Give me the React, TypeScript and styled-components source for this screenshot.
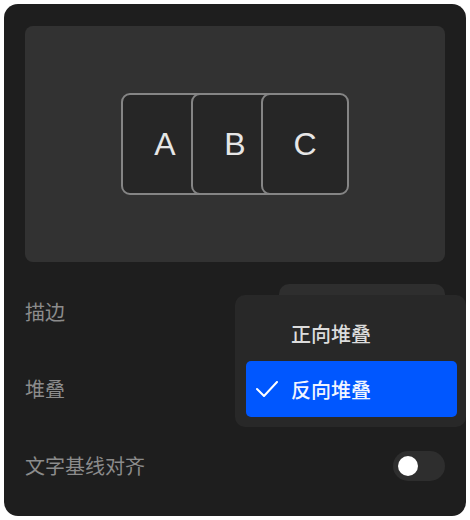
import React from 'react';
import styled, { createGlobalStyle } from 'styled-components';

const GlobalStyle = createGlobalStyle`
  html, body {
    margin: 0;
    padding: 0;
    background: #ffffff;
  }
  * {
    box-sizing: border-box;
  }
`;

const cjk = `"Noto Sans CJK SC", "Noto Sans", sans-serif`;

const Panel = styled.div`
  margin: 4px;
  width: 462px;
  height: 512px;
  background-color: #1e1e1e;
  border-radius: 14px;
  padding: 22px 21px;
  display: flex;
  flex-direction: column;
  gap: 21px;
  font-family: ${cjk};
`;

const Preview = styled.div`
  height: 236px;
  margin-bottom: 1px;
  background-color: #323232;
  border-radius: 8px;
  display: flex;
  align-items: center;
  justify-content: center;
`;

const CardStack = styled.div`
  display: flex;
`;

const Card = styled.div`
  width: 88px;
  height: 102px;
  background-color: #262626;
  border: 2px solid #858585;
  border-radius: 9px;
  display: flex;
  align-items: center;
  justify-content: center;
  font-family: "Liberation Sans", Arial, sans-serif;
  font-size: 32px;
  color: #e6e6e6;

  & + & {
    margin-left: -18px;
  }
`;

const Row = styled.div`
  height: 56px;
  display: flex;
  align-items: center;
  justify-content: space-between;
`;

const Label = styled.span`
  font-size: 20px;
  color: #8c8c8c;
  line-height: 1;
`;

const Select = styled.div`
  position: relative;
  width: 166px;
  height: 56px;
  background-color: #2e2e2e;
  border-radius: 10px;
`;

const Menu = styled.div`
  position: absolute;
  top: 11px;
  left: -44px;
  width: 231px;
  padding: 10px 9px 10px 11px;
  background-color: #282828;
  border-radius: 10px;
  z-index: 10;
  display: flex;
  flex-direction: column;
`;

const Item = styled.div<{ $active?: boolean }>`
  height: 56px;
  display: flex;
  align-items: center;
  padding-left: 10px;
  border-radius: 5px;
  font-size: 20px;
  font-weight: 500;
  color: ${(p) => (p.$active ? '#f2f5ff' : '#dcdcdc')};
  background-color: ${(p) => (p.$active ? '#0057ff' : 'transparent')};
`;

const CheckSlot = styled.span`
  width: 35px;
  display: flex;
  align-items: center;
`;

const Toggle = styled.div`
  width: 52px;
  height: 30px;
  border-radius: 15px;
  background-color: #2e2e2e;
  padding: 5px;
  display: flex;
  align-items: center;
`;

const Knob = styled.span`
  width: 20px;
  height: 20px;
  border-radius: 50%;
  background-color: #ffffff;
`;

const Check = () => (
  <svg width="22" height="16" viewBox="0 0 22 16" fill="none">
    <polyline points="1,8 8,15 21,1" stroke="#ffffff" strokeWidth="2" strokeLinecap="round" strokeLinejoin="round" />
  </svg>
);

const options = ['正向堆叠', '反向堆叠'];
const selected = '反向堆叠';

export default function App() {
  return (
    <>
      <GlobalStyle />
      <Panel>
        <Preview>
          <CardStack>
            {['A', 'B', 'C'].map((l) => (
              <Card key={l}>{l}</Card>
            ))}
          </CardStack>
        </Preview>
        <Row>
          <Label>描边</Label>
          <Select>
            <Menu>
              {options.map((o) => (
                <Item key={o} $active={o === selected}>
                  <CheckSlot>{o === selected && <Check />}</CheckSlot>
                  {o}
                </Item>
              ))}
            </Menu>
          </Select>
        </Row>
        <Row>
          <Label>堆叠</Label>
        </Row>
        <Row>
          <Label>文字基线对齐</Label>
          <Toggle>
            <Knob />
          </Toggle>
        </Row>
      </Panel>
    </>
  );
}
